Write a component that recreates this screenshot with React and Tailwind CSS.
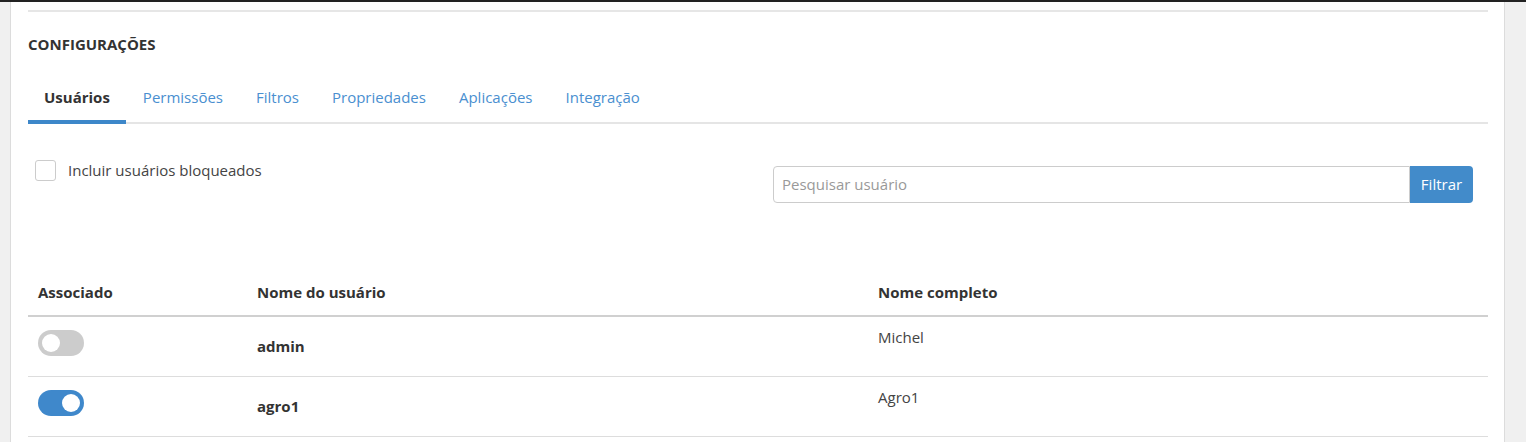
const tabs = ['Usuários', 'Permissões', 'Filtros', 'Propriedades', 'Aplicações', 'Integração']

const users = [
    { login: 'admin', name: 'Michel', on: false },
    { login: 'agro1', name: 'Agro1', on: true },
]

function Toggle({ on }) {
    return (
        <div className={`w-[46px] h-[26px] rounded-full flex items-center px-[4px] ${on ? 'bg-[#3f88cb] justify-end' : 'bg-[#cccccc] justify-start'}`}>
            <div className="w-[18px] h-[18px] rounded-full bg-white" />
        </div>
    )
}

export default function App() {
    return (
        <div className="w-[1526px] h-[442px] overflow-hidden bg-[#f0f0f0] text-[#333] font-['Open_Sans',sans-serif]">
            <div className="h-[2px] bg-[#222]" />
            <div className="flex h-[440px]">
                <div className="w-[11px] border-r border-[#dcdcdc] shrink-0" />
                <div className="w-[1494px] bg-white border-r border-[#dcdcdc] pl-[17px] pr-[16px] pt-[8px]">
                    <div className="h-[2px] bg-[#e6e6e6]" />

                    <h2 className="mt-[22px] text-[15px] leading-[20px] font-bold">CONFIGURAÇÕES</h2>

                    <div className="mt-[23px] flex gap-px border-b-2 border-[#e5e5e5]">
                        {tabs.map((t, i) => (
                            <div
                                key={t}
                                className={`px-4 pt-[10px] pb-[12px] text-[15px] leading-[21px] border-b-4 -mb-[2px] ${i === 0 ? 'font-bold text-[#333] border-[#3d87c9]' : 'text-[#4a8fd0] border-transparent'}`}
                            >
                                {t}
                            </div>
                        ))}
                    </div>

                    <div className="flex justify-between">
                        <label className="flex items-center gap-[12px] ml-[7px] mt-[36px] h-[21px] text-[15px]">
                            <span className="w-[21px] h-[21px] rounded-[3px] border border-[#cccccc] bg-white" />
                            <span className="text-[#444]">Incluir usuários bloqueados</span>
                        </label>
                        <div className="flex mt-[42px] mr-[15px] w-[700px] h-[37px]">
                            <input
                                placeholder="Pesquisar usuário"
                                className="flex-1 border border-[#cccccc] rounded-l-[4px] px-[8px] text-[15px] text-[#555] placeholder:text-[#999] outline-none"
                            />
                            <button className="w-[63px] bg-[#428bca] text-white text-[15px] rounded-r-[4px]">Filtrar</button>
                        </div>
                    </div>

                    <div className="mt-[69px]">
                        <div className="grid grid-cols-[219px_621px_1fr] border-b-2 border-[#d0d0d0] text-[15px] font-bold leading-[21px]">
                            <div className="px-[10px] pt-[10px] pb-[12px]">Associado</div>
                            <div className="px-[10px] pt-[10px] pb-[12px]">Nome do usuário</div>
                            <div className="px-[10px] pt-[10px] pb-[12px]">Nome completo</div>
                        </div>
                        {users.map((u) => (
                            <div key={u.login} className="grid grid-cols-[219px_621px_1fr] h-[60px] border-b border-[#dddddd] text-[15px] leading-[21px]">
                                <div className="px-[10px] pt-[13px]"><Toggle on={u.on} /></div>
                                <div className="px-[10px] pt-[19px] font-bold">{u.login}</div>
                                <div className="px-[10px] pt-[10px] text-[#444]">{u.name}</div>
                            </div>
                        ))}
                    </div>
                </div>
            </div>
        </div>
    )
}
